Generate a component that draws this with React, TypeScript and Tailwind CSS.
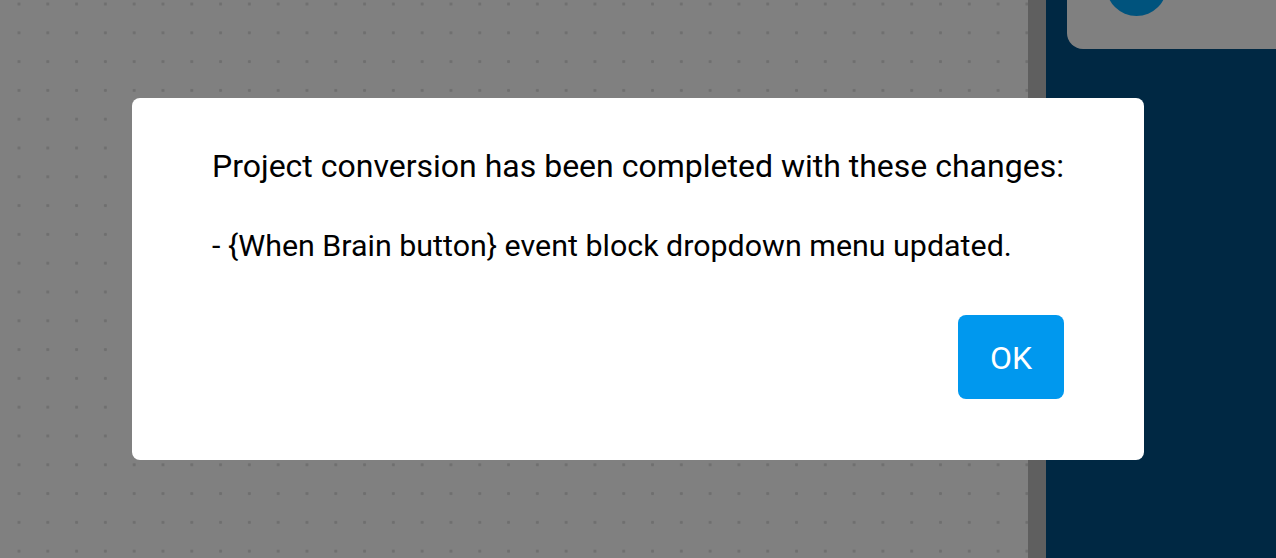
export default function App() {
  return (
    <div className="relative flex h-[558px] w-[1276px] overflow-hidden font-['Roboto',sans-serif]">
      {/* workspace canvas (dimmed by the modal) */}
      <div className="h-full w-[1028px] bg-[#808080] bg-[radial-gradient(circle,#6f6f6f_1.3px,transparent_1.8px)] bg-[length:28.8px_28.8px] bg-[position:4.6px_-10.4px]" />
      <div className="h-full w-[18px] bg-[#5f5f5f]" />
      {/* right panel */}
      <div className="h-full flex-1 bg-[#002843] pl-[21px]">
        <div className="relative h-[49px] overflow-hidden rounded-bl-[16px] bg-[#808080]">
          <div className="absolute left-[39px] top-[-45px] h-[61px] w-[61px] rounded-full bg-[#00537d]" />
        </div>
      </div>

      {/* modal */}
      <div className="absolute inset-0 flex items-center justify-center">
        <div className="flex h-[362px] w-[1012px] flex-col rounded-[8px] bg-white px-20 pt-[50px] text-[32px] leading-[37.5px] text-black">
          <p className="whitespace-nowrap">Project conversion has been completed with these changes:</p>
          <p className="mt-[41px] whitespace-nowrap text-[30.4px]">- {'{'}When Brain button{'}'} event block dropdown menu updated.</p>
          <div className="mt-[51px] flex justify-end">
            <button className="h-[84px] w-[106px] rounded-[8px] bg-[#0098ee] pt-[3px] text-[32px] text-white">OK</button>
          </div>
        </div>
      </div>
    </div>
  );
}
